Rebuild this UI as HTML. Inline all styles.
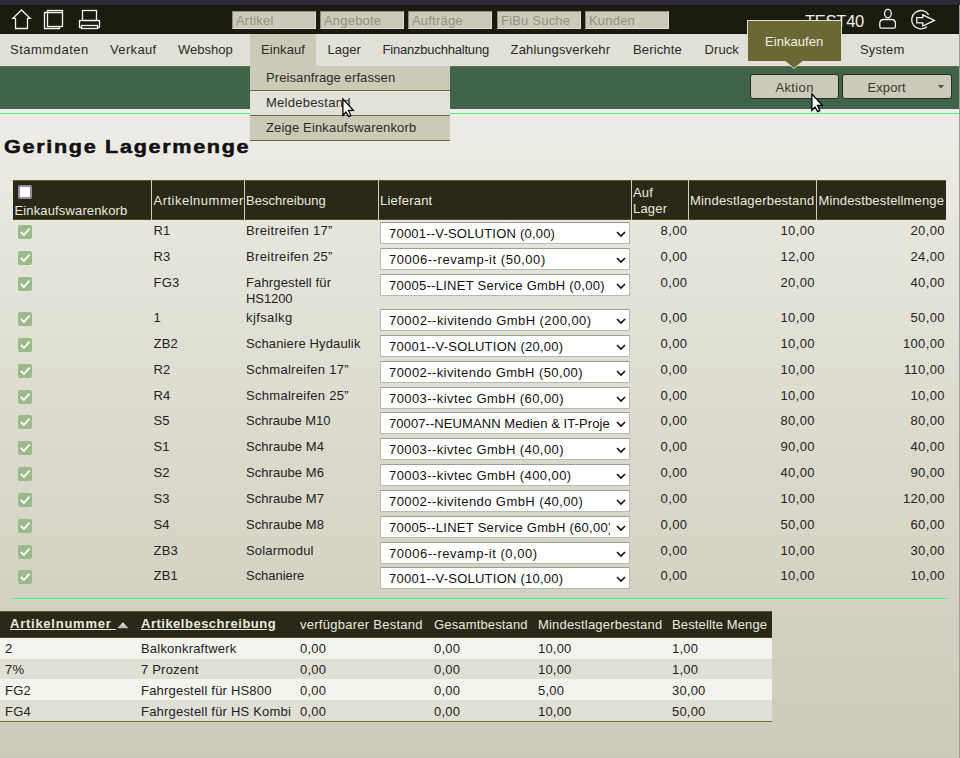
<!DOCTYPE html>
<html><head><meta charset="utf-8"><title>Geringe Lagermenge</title>
<style>
*{box-sizing:border-box}
html,body{margin:0;padding:0}
body{width:960px;height:758px;overflow:hidden;position:relative;font-family:"Liberation Sans",sans-serif;font-size:13px;color:#222;
background:linear-gradient(to bottom,#eeeee8 0px,#ecebe5 130px,#dad9cb 450px,#cccbb9 758px);}
.a{position:absolute}
.t{position:absolute;white-space:nowrap;line-height:15px;font-size:13px;letter-spacing:0.2px}
#strip{left:0;top:0;width:960px;height:5px;background:#2b2a39}
#top{left:0;top:5px;width:959px;height:29px;background:#1c1b10}
.srch{position:absolute;top:11px;width:84px;height:18px;background:#cbcab9;border-top:1px solid #8d8c80;border-left:1px solid #8d8c80;border-right:1px solid #e0dfd0;border-bottom:1px solid #e0dfd0}
.ph{color:#908f80}
#menu{left:0;top:34px;width:959px;height:32px;background:#e1e0d8}
.mi{color:#2a2a24}
#olive{left:0;top:66px;width:959px;height:1px;background:#6b6a38}
#green{left:0;top:67px;width:959px;height:42px;background:#3f6449}
#gap{left:0;top:109px;width:959px;height:4px;background:#efeee9}
#gline{left:0;top:113px;width:959px;height:1px;background:#3ff982}
#redge{left:959px;top:5px;width:1px;height:753px;background:#9e9e9a}
#redge2{display:none}
.btn{position:absolute;top:74px;height:25px;background:#cbcab8;border:1px solid #2b2a1c;border-radius:3px}
.bt{color:#3a3a2c}
.dd{position:absolute;left:250px;width:200px;height:25px;background:#cbcab8;border-bottom:1px solid #6b6a38}
#tip{left:747px;top:20px;width:95px;height:41px;background:#6a6936;border:1px solid #dedece;border-bottom:none}
.hdr{position:absolute;background:#2a2816;border-top:1px solid #57552a;border-bottom:1px solid #4b4922}
.sep{position:absolute;top:180px;width:1px;height:40px;background:#cfcfbf}
.ht{color:#ebebdf}
.sel{position:absolute;left:380px;width:250px;height:22px;background:#fff;border:1px solid #b9b9b4;border-top-color:#9c9c98;overflow:hidden}
.cb{position:absolute;left:18px;width:14px;height:14px;background:#9cb98b;border-radius:2px}
.r2{position:absolute;left:0;width:772px}
</style></head><body>

<div class="a" id="strip"></div><div class="a" id="top"></div><div class="a" style="left:0;top:5px;width:959px;height:1px;background:#121209"></div><div class="a" style="left:0;top:33px;width:959px;height:1px;background:#121209"></div>
<svg class="a" style="left:0;top:0" width="960" height="34" viewBox="0 0 960 34" fill="none" stroke="#f4f4ee" stroke-width="1.3">
<polygon points="21.5,10 12.9,18.4 15.5,18.4 15.5,28.5 27.5,28.5 27.5,18.4 30.1,18.4" stroke-linejoin="miter"/>
<rect x="47.5" y="10.5" width="15" height="16"/>
<polyline points="62.5,12.5 44.5,12.5 44.5,28.5 59.5,28.5 59.5,26.5"/>
<rect x="82.5" y="10.5" width="14" height="10"/>
<rect x="79.5" y="20.5" width="20" height="7"/>
<rect x="81.5" y="25.5" width="16" height="3" fill="#1c1b10"/>
<ellipse cx="887.9" cy="13.6" rx="3.4" ry="4.2"/>
<path d="M881.3,28.2 Q879.8,28.2 879.8,26.5 L879.8,23.3 Q879.8,19.5 884,19.5 L891.2,19.5 Q895.4,19.5 895.4,23.3 L895.4,26.5 Q895.4,28.2 893.9,28.2 Z"/>
<path d="M928.7,14.9 A9.2,9.2 0 1 0 926.9,26.7"/>
<polygon points="916.8,17.7 922.8,17.7 922.8,14.8 934.4,20.4 922.8,26 922.8,22.8 916.8,22.8" stroke-linejoin="miter"/>
</svg>
<div class="srch" style="left:232px"></div>
<div class="t ph" style="left:236px;top:13px;">Artikel</div>
<div class="srch" style="left:320px"></div>
<div class="t ph" style="left:324px;top:13px;">Angebote</div>
<div class="srch" style="left:408px"></div>
<div class="t ph" style="left:412px;top:13px;">Aufträge</div>
<div class="srch" style="left:497px"></div>
<div class="t ph" style="left:501px;top:13px;">FiBu Suche</div>
<div class="srch" style="left:585px"></div>
<div class="t ph" style="left:589px;top:13px;">Kunden</div>
<div class="t " style="left:805px;top:15px;font-size:16.5px;line-height:18px;color:#efefe8;letter-spacing:-0.25px;top:12px">TEST40</div>
<div class="a" id="menu"></div><div class="a" id="olive"></div>
<div class="a" style="left:250px;top:34px;width:66px;height:33px;background:#cbcab8"></div>
<div class="t mi" style="left:10px;top:42px;letter-spacing:0.5px">Stammdaten</div>
<div class="t mi" style="left:110px;top:42px;letter-spacing:0.35px">Verkauf</div>
<div class="t mi" style="left:178px;top:42px;letter-spacing:0px">Webshop</div>
<div class="t mi" style="left:261px;top:42px;letter-spacing:0.1px">Einkauf</div>
<div class="t mi" style="left:327.5px;top:42px;letter-spacing:0px">Lager</div>
<div class="t mi" style="left:382.5px;top:42px;letter-spacing:-0.2px">Finanzbuchhaltung</div>
<div class="t mi" style="left:510.5px;top:42px;letter-spacing:0.2px">Zahlungsverkehr</div>
<div class="t mi" style="left:633px;top:42px;letter-spacing:0.15px">Berichte</div>
<div class="t mi" style="left:704.5px;top:42px;letter-spacing:0.1px">Druck</div>
<div class="t mi" style="left:760px;top:42px;letter-spacing:0.2px">Programm</div>
<div class="t mi" style="left:860px;top:42px;letter-spacing:0.2px">System</div>
<div class="a" id="green"></div><div class="a" id="gap"></div><div class="a" id="gline"></div>
<div class="btn" style="left:750px;width:89px"></div>
<div class="t bt" style="left:775.5px;top:80px;letter-spacing:0.35px">Aktion</div>
<div class="btn" style="left:842px;width:110px"></div>
<div class="t bt" style="left:867.5px;top:80px;letter-spacing:0.1px">Export</div>
<svg class="a" style="left:936.5px;top:84px" width="8" height="6"><polygon points="1,1 7,1 4,4.5" fill="#4c4c54"/></svg>
<div class="dd" style="top:66px"></div>
<div class="dd" style="top:91px;background:#e3e2da"></div>
<div class="dd" style="top:116px"></div>
<div class="t mi" style="left:266px;top:70px;letter-spacing:0.1px">Preisanfrage erfassen</div>
<div class="t mi" style="left:266px;top:95px;letter-spacing:0.25px">Meldebestand</div>
<div class="t mi" style="left:266px;top:120px;letter-spacing:0.16px">Zeige Einkaufswarenkorb</div>
<div class="a" id="tip"></div>
<svg class="a" style="left:780px;top:60px" width="28" height="12"><polygon points="5,1 23,1 14,8.5" fill="#6a6936"/><polyline points="5,1 14,8.5 23,1" fill="none" stroke="#dedece" stroke-width="1"/><rect x="6" y="0" width="16" height="1.6" fill="#6a6936"/></svg>
<div class="t " style="left:765px;top:34px;color:#f0f0e2;letter-spacing:0.05px">Einkaufen</div>
<div class="a" id="redge"></div><div class="a" id="redge2"></div>
<div class="t" style="left:3.5px;top:137px;font-size:18px;line-height:20px;font-weight:bold;letter-spacing:1.4px;color:#111;-webkit-text-stroke:0.5px #111;transform:scaleX(1.2);transform-origin:0 0">Geringe Lagermenge</div>
<div class="hdr" style="left:13px;top:180px;width:933px;height:40px"></div>
<div class="sep" style="left:151px"></div>
<div class="sep" style="left:244px"></div>
<div class="sep" style="left:378px"></div>
<div class="sep" style="left:631px"></div>
<div class="sep" style="left:688px"></div>
<div class="sep" style="left:816px"></div>
<div class="a" style="left:18px;top:185px;width:14px;height:14px;background:#fff;border:2px solid #8f8fa0;border-radius:2px"></div>
<div class="t ht" style="left:14.5px;top:203px;letter-spacing:0.14px">Einkaufswarenkorb</div>
<div class="t ht" style="left:153.5px;top:193px;letter-spacing:0.5px">Artikelnummer</div>
<div class="t ht" style="left:246px;top:193px;letter-spacing:0.02px">Beschreibung</div>
<div class="t ht" style="left:380px;top:193px;">Lieferant</div>
<div class="t ht" style="left:633px;top:185px;">Auf</div>
<div class="t ht" style="left:633px;top:201px;">Lager</div>
<div class="t ht" style="left:690px;top:193px;letter-spacing:0.19px">Mindestlagerbestand</div>
<div class="t ht" style="left:818.5px;top:193px;letter-spacing:0.14px">Mindestbestellmenge</div>
<svg class="a" style="left:18px;top:225px" width="14" height="14"><rect width="14" height="14" rx="2" fill="#9cb98b"/><polyline points="2.8,6.8 5.9,10 11.5,3.6" fill="none" stroke="#fff" stroke-width="1.8"/></svg>
<div class="t " style="left:153.5px;top:223px;">R1</div>
<div class="t " style="left:246px;top:223px;letter-spacing:0.34px">Breitreifen 17”</div>
<div class="sel" style="top:222px"><div class="t" style="left:8px;top:2.5px;color:#111;letter-spacing:0.21px">70001--V-SOLUTION (0,00)</div><div style="position:absolute;right:0;top:0;width:19px;height:20px;background:#fff"></div><svg style="position:absolute;left:235px;top:7.5px" width="10" height="7"><polyline points="1,1 5,5 9,1" fill="none" stroke="#111" stroke-width="1.6"/></svg></div>
<div class="t " style="right:272.70000000000005px;top:223px;letter-spacing:0.35px">8,00</div>
<div class="t " style="right:145.20000000000005px;top:223px;letter-spacing:0.35px">10,00</div>
<div class="t " style="right:15.200000000000045px;top:223px;letter-spacing:0.35px">20,00</div>
<svg class="a" style="left:18px;top:251px" width="14" height="14"><rect width="14" height="14" rx="2" fill="#9cb98b"/><polyline points="2.8,6.8 5.9,10 11.5,3.6" fill="none" stroke="#fff" stroke-width="1.8"/></svg>
<div class="t " style="left:153.5px;top:249px;">R3</div>
<div class="t " style="left:246px;top:249px;letter-spacing:0.34px">Breitreifen 25”</div>
<div class="sel" style="top:248px"><div class="t" style="left:8px;top:2.5px;color:#111;letter-spacing:0.54px">70006--revamp-it (50,00)</div><div style="position:absolute;right:0;top:0;width:19px;height:20px;background:#fff"></div><svg style="position:absolute;left:235px;top:7.5px" width="10" height="7"><polyline points="1,1 5,5 9,1" fill="none" stroke="#111" stroke-width="1.6"/></svg></div>
<div class="t " style="right:272.70000000000005px;top:249px;letter-spacing:0.35px">0,00</div>
<div class="t " style="right:145.20000000000005px;top:249px;letter-spacing:0.35px">12,00</div>
<div class="t " style="right:15.200000000000045px;top:249px;letter-spacing:0.35px">24,00</div>
<svg class="a" style="left:18px;top:277px" width="14" height="14"><rect width="14" height="14" rx="2" fill="#9cb98b"/><polyline points="2.8,6.8 5.9,10 11.5,3.6" fill="none" stroke="#fff" stroke-width="1.8"/></svg>
<div class="t " style="left:153.5px;top:275px;">FG3</div>
<div class="t " style="left:246px;top:275px;letter-spacing:0.14px">Fahrgestell für</div>
<div class="t " style="left:246px;top:291px;letter-spacing:-0.08px">HS1200</div>
<div class="sel" style="top:274px"><div class="t" style="left:8px;top:2.5px;color:#111;letter-spacing:0.27px">70005--LINET Service GmbH (0,00)</div><div style="position:absolute;right:0;top:0;width:19px;height:20px;background:#fff"></div><svg style="position:absolute;left:235px;top:7.5px" width="10" height="7"><polyline points="1,1 5,5 9,1" fill="none" stroke="#111" stroke-width="1.6"/></svg></div>
<div class="t " style="right:272.70000000000005px;top:275px;letter-spacing:0.35px">0,00</div>
<div class="t " style="right:145.20000000000005px;top:275px;letter-spacing:0.35px">20,00</div>
<div class="t " style="right:15.200000000000045px;top:275px;letter-spacing:0.35px">40,00</div>
<svg class="a" style="left:18px;top:312px" width="14" height="14"><rect width="14" height="14" rx="2" fill="#9cb98b"/><polyline points="2.8,6.8 5.9,10 11.5,3.6" fill="none" stroke="#fff" stroke-width="1.8"/></svg>
<div class="t " style="left:153.5px;top:310px;">1</div>
<div class="t " style="left:246px;top:310px;letter-spacing:0.40px">kjfsalkg</div>
<div class="sel" style="top:309px"><div class="t" style="left:8px;top:2.5px;color:#111;letter-spacing:0.44px">70002--kivitendo GmbH (200,00)</div><div style="position:absolute;right:0;top:0;width:19px;height:20px;background:#fff"></div><svg style="position:absolute;left:235px;top:7.5px" width="10" height="7"><polyline points="1,1 5,5 9,1" fill="none" stroke="#111" stroke-width="1.6"/></svg></div>
<div class="t " style="right:272.70000000000005px;top:310px;letter-spacing:0.35px">0,00</div>
<div class="t " style="right:145.20000000000005px;top:310px;letter-spacing:0.35px">10,00</div>
<div class="t " style="right:15.200000000000045px;top:310px;letter-spacing:0.35px">50,00</div>
<svg class="a" style="left:18px;top:338px" width="14" height="14"><rect width="14" height="14" rx="2" fill="#9cb98b"/><polyline points="2.8,6.8 5.9,10 11.5,3.6" fill="none" stroke="#fff" stroke-width="1.8"/></svg>
<div class="t " style="left:153.5px;top:336px;">ZB2</div>
<div class="t " style="left:246px;top:336px;letter-spacing:0.14px">Schaniere Hydaulik</div>
<div class="sel" style="top:335px"><div class="t" style="left:8px;top:2.5px;color:#111;letter-spacing:0.24px">70001--V-SOLUTION (20,00)</div><div style="position:absolute;right:0;top:0;width:19px;height:20px;background:#fff"></div><svg style="position:absolute;left:235px;top:7.5px" width="10" height="7"><polyline points="1,1 5,5 9,1" fill="none" stroke="#111" stroke-width="1.6"/></svg></div>
<div class="t " style="right:272.70000000000005px;top:336px;letter-spacing:0.35px">0,00</div>
<div class="t " style="right:145.20000000000005px;top:336px;letter-spacing:0.35px">10,00</div>
<div class="t " style="right:15.200000000000045px;top:336px;letter-spacing:0.35px">100,00</div>
<svg class="a" style="left:18px;top:364px" width="14" height="14"><rect width="14" height="14" rx="2" fill="#9cb98b"/><polyline points="2.8,6.8 5.9,10 11.5,3.6" fill="none" stroke="#fff" stroke-width="1.8"/></svg>
<div class="t " style="left:153.5px;top:362px;">R2</div>
<div class="t " style="left:246px;top:362px;letter-spacing:0.29px">Schmalreifen 17”</div>
<div class="sel" style="top:361px"><div class="t" style="left:8px;top:2.5px;color:#111;letter-spacing:0.41px">70002--kivitendo GmbH (50,00)</div><div style="position:absolute;right:0;top:0;width:19px;height:20px;background:#fff"></div><svg style="position:absolute;left:235px;top:7.5px" width="10" height="7"><polyline points="1,1 5,5 9,1" fill="none" stroke="#111" stroke-width="1.6"/></svg></div>
<div class="t " style="right:272.70000000000005px;top:362px;letter-spacing:0.35px">0,00</div>
<div class="t " style="right:145.20000000000005px;top:362px;letter-spacing:0.35px">10,00</div>
<div class="t " style="right:15.200000000000045px;top:362px;letter-spacing:0.35px">110,00</div>
<svg class="a" style="left:18px;top:390px" width="14" height="14"><rect width="14" height="14" rx="2" fill="#9cb98b"/><polyline points="2.8,6.8 5.9,10 11.5,3.6" fill="none" stroke="#fff" stroke-width="1.8"/></svg>
<div class="t " style="left:153.5px;top:388px;">R4</div>
<div class="t " style="left:246px;top:388px;letter-spacing:0.29px">Schmalreifen 25”</div>
<div class="sel" style="top:387px"><div class="t" style="left:8px;top:2.5px;color:#111;letter-spacing:0.42px">70003--kivtec GmbH (60,00)</div><div style="position:absolute;right:0;top:0;width:19px;height:20px;background:#fff"></div><svg style="position:absolute;left:235px;top:7.5px" width="10" height="7"><polyline points="1,1 5,5 9,1" fill="none" stroke="#111" stroke-width="1.6"/></svg></div>
<div class="t " style="right:272.70000000000005px;top:388px;letter-spacing:0.35px">0,00</div>
<div class="t " style="right:145.20000000000005px;top:388px;letter-spacing:0.35px">10,00</div>
<div class="t " style="right:15.200000000000045px;top:388px;letter-spacing:0.35px">10,00</div>
<svg class="a" style="left:18px;top:415px" width="14" height="14"><rect width="14" height="14" rx="2" fill="#9cb98b"/><polyline points="2.8,6.8 5.9,10 11.5,3.6" fill="none" stroke="#fff" stroke-width="1.8"/></svg>
<div class="t " style="left:153.5px;top:413px;">S5</div>
<div class="t " style="left:246px;top:413px;letter-spacing:0.00px">Schraube M10</div>
<div class="sel" style="top:412px"><div class="t" style="left:8px;top:2.5px;color:#111;letter-spacing:0.08px">70007--NEUMANN Medien &amp; IT-Projekte</div><div style="position:absolute;right:0;top:0;width:19px;height:20px;background:#fff"></div><svg style="position:absolute;left:235px;top:7.5px" width="10" height="7"><polyline points="1,1 5,5 9,1" fill="none" stroke="#111" stroke-width="1.6"/></svg></div>
<div class="t " style="right:272.70000000000005px;top:413px;letter-spacing:0.35px">0,00</div>
<div class="t " style="right:145.20000000000005px;top:413px;letter-spacing:0.35px">80,00</div>
<div class="t " style="right:15.200000000000045px;top:413px;letter-spacing:0.35px">80,00</div>
<svg class="a" style="left:18px;top:441px" width="14" height="14"><rect width="14" height="14" rx="2" fill="#9cb98b"/><polyline points="2.8,6.8 5.9,10 11.5,3.6" fill="none" stroke="#fff" stroke-width="1.8"/></svg>
<div class="t " style="left:153.5px;top:439px;">S1</div>
<div class="t " style="left:246px;top:439px;letter-spacing:0.06px">Schraube M4</div>
<div class="sel" style="top:438px"><div class="t" style="left:8px;top:2.5px;color:#111;letter-spacing:0.42px">70003--kivtec GmbH (40,00)</div><div style="position:absolute;right:0;top:0;width:19px;height:20px;background:#fff"></div><svg style="position:absolute;left:235px;top:7.5px" width="10" height="7"><polyline points="1,1 5,5 9,1" fill="none" stroke="#111" stroke-width="1.6"/></svg></div>
<div class="t " style="right:272.70000000000005px;top:439px;letter-spacing:0.35px">0,00</div>
<div class="t " style="right:145.20000000000005px;top:439px;letter-spacing:0.35px">90,00</div>
<div class="t " style="right:15.200000000000045px;top:439px;letter-spacing:0.35px">40,00</div>
<svg class="a" style="left:18px;top:467px" width="14" height="14"><rect width="14" height="14" rx="2" fill="#9cb98b"/><polyline points="2.8,6.8 5.9,10 11.5,3.6" fill="none" stroke="#fff" stroke-width="1.8"/></svg>
<div class="t " style="left:153.5px;top:465px;">S2</div>
<div class="t " style="left:246px;top:465px;letter-spacing:0.06px">Schraube M6</div>
<div class="sel" style="top:464px"><div class="t" style="left:8px;top:2.5px;color:#111;letter-spacing:0.42px">70003--kivtec GmbH (400,00)</div><div style="position:absolute;right:0;top:0;width:19px;height:20px;background:#fff"></div><svg style="position:absolute;left:235px;top:7.5px" width="10" height="7"><polyline points="1,1 5,5 9,1" fill="none" stroke="#111" stroke-width="1.6"/></svg></div>
<div class="t " style="right:272.70000000000005px;top:465px;letter-spacing:0.35px">0,00</div>
<div class="t " style="right:145.20000000000005px;top:465px;letter-spacing:0.35px">40,00</div>
<div class="t " style="right:15.200000000000045px;top:465px;letter-spacing:0.35px">90,00</div>
<svg class="a" style="left:18px;top:493px" width="14" height="14"><rect width="14" height="14" rx="2" fill="#9cb98b"/><polyline points="2.8,6.8 5.9,10 11.5,3.6" fill="none" stroke="#fff" stroke-width="1.8"/></svg>
<div class="t " style="left:153.5px;top:491px;">S3</div>
<div class="t " style="left:246px;top:491px;letter-spacing:0.06px">Schraube M7</div>
<div class="sel" style="top:490px"><div class="t" style="left:8px;top:2.5px;color:#111;letter-spacing:0.42px">70002--kivitendo GmbH (40,00)</div><div style="position:absolute;right:0;top:0;width:19px;height:20px;background:#fff"></div><svg style="position:absolute;left:235px;top:7.5px" width="10" height="7"><polyline points="1,1 5,5 9,1" fill="none" stroke="#111" stroke-width="1.6"/></svg></div>
<div class="t " style="right:272.70000000000005px;top:491px;letter-spacing:0.35px">0,00</div>
<div class="t " style="right:145.20000000000005px;top:491px;letter-spacing:0.35px">10,00</div>
<div class="t " style="right:15.200000000000045px;top:491px;letter-spacing:0.35px">120,00</div>
<svg class="a" style="left:18px;top:519px" width="14" height="14"><rect width="14" height="14" rx="2" fill="#9cb98b"/><polyline points="2.8,6.8 5.9,10 11.5,3.6" fill="none" stroke="#fff" stroke-width="1.8"/></svg>
<div class="t " style="left:153.5px;top:517px;">S4</div>
<div class="t " style="left:246px;top:517px;letter-spacing:0.06px">Schraube M8</div>
<div class="sel" style="top:516px"><div class="t" style="left:8px;top:2.5px;color:#111;letter-spacing:0.28px">70005--LINET Service GmbH (60,00)</div><div style="position:absolute;right:0;top:0;width:19px;height:20px;background:#fff"></div><svg style="position:absolute;left:235px;top:7.5px" width="10" height="7"><polyline points="1,1 5,5 9,1" fill="none" stroke="#111" stroke-width="1.6"/></svg></div>
<div class="t " style="right:272.70000000000005px;top:517px;letter-spacing:0.35px">0,00</div>
<div class="t " style="right:145.20000000000005px;top:517px;letter-spacing:0.35px">50,00</div>
<div class="t " style="right:15.200000000000045px;top:517px;letter-spacing:0.35px">60,00</div>
<svg class="a" style="left:18px;top:545px" width="14" height="14"><rect width="14" height="14" rx="2" fill="#9cb98b"/><polyline points="2.8,6.8 5.9,10 11.5,3.6" fill="none" stroke="#fff" stroke-width="1.8"/></svg>
<div class="t " style="left:153.5px;top:543px;">ZB3</div>
<div class="t " style="left:246px;top:543px;letter-spacing:0.19px">Solarmodul</div>
<div class="sel" style="top:542px"><div class="t" style="left:8px;top:2.5px;color:#111;letter-spacing:0.52px">70006--revamp-it (0,00)</div><div style="position:absolute;right:0;top:0;width:19px;height:20px;background:#fff"></div><svg style="position:absolute;left:235px;top:7.5px" width="10" height="7"><polyline points="1,1 5,5 9,1" fill="none" stroke="#111" stroke-width="1.6"/></svg></div>
<div class="t " style="right:272.70000000000005px;top:543px;letter-spacing:0.35px">0,00</div>
<div class="t " style="right:145.20000000000005px;top:543px;letter-spacing:0.35px">10,00</div>
<div class="t " style="right:15.200000000000045px;top:543px;letter-spacing:0.35px">30,00</div>
<svg class="a" style="left:18px;top:570px" width="14" height="14"><rect width="14" height="14" rx="2" fill="#9cb98b"/><polyline points="2.8,6.8 5.9,10 11.5,3.6" fill="none" stroke="#fff" stroke-width="1.8"/></svg>
<div class="t " style="left:153.5px;top:568px;">ZB1</div>
<div class="t " style="left:246px;top:568px;letter-spacing:-0.04px">Schaniere</div>
<div class="sel" style="top:567px"><div class="t" style="left:8px;top:2.5px;color:#111;letter-spacing:0.24px">70001--V-SOLUTION (10,00)</div><div style="position:absolute;right:0;top:0;width:19px;height:20px;background:#fff"></div><svg style="position:absolute;left:235px;top:7.5px" width="10" height="7"><polyline points="1,1 5,5 9,1" fill="none" stroke="#111" stroke-width="1.6"/></svg></div>
<div class="t " style="right:272.70000000000005px;top:568px;letter-spacing:0.35px">0,00</div>
<div class="t " style="right:145.20000000000005px;top:568px;letter-spacing:0.35px">10,00</div>
<div class="t " style="right:15.200000000000045px;top:568px;letter-spacing:0.35px">10,00</div>
<div class="a" style="left:12px;top:598px;width:935px;height:1px;background:#3ff982"></div>
<div class="hdr" style="left:0;top:611px;width:772px;height:27px"></div>
<div class="t ht" style="left:10px;top:616px;font-weight:bold;text-decoration:underline;letter-spacing:0.75px">Artikelnummer&nbsp;</div>
<svg class="a" style="left:116px;top:620px" width="14" height="10"><defs><linearGradient id="sg" x1="0" y1="0" x2="0" y2="1"><stop offset="0" stop-color="#e8e8e8"/><stop offset="1" stop-color="#b0b0b0"/></linearGradient></defs><polygon points="1.2,8.2 12.6,8.2 6.9,2.2" fill="url(#sg)"/></svg>
<div class="t ht" style="left:141px;top:616px;font-weight:bold;text-decoration:underline;letter-spacing:0.5px">Artikelbeschreibung</div>
<div class="t ht" style="left:300px;top:617px;letter-spacing:0.26px">verfügbarer Bestand</div>
<div class="t ht" style="left:434px;top:617px;letter-spacing:0.15px">Gesamtbestand</div>
<div class="t ht" style="left:538px;top:617px;letter-spacing:0.19px">Mindestlagerbestand</div>
<div class="t ht" style="left:672px;top:617px;letter-spacing:0.13px">Bestellte Menge</div>
<div class="r2" style="top:638px;height:20.7px;background:#f3f3ee"></div>
<div class="t " style="left:5px;top:641px;">2</div>
<div class="t " style="left:141px;top:641px;">Balkonkraftwerk</div>
<div class="t " style="left:300px;top:641px;">0,00</div>
<div class="t " style="left:434px;top:641px;">0,00</div>
<div class="t " style="left:538px;top:641px;">10,00</div>
<div class="t " style="left:672px;top:641px;">1,00</div>
<div class="r2" style="top:658.7px;height:20.7px;background:#e0dfd6"></div>
<div class="t " style="left:5px;top:662px;">7%</div>
<div class="t " style="left:141px;top:662px;">7 Prozent</div>
<div class="t " style="left:300px;top:662px;">0,00</div>
<div class="t " style="left:434px;top:662px;">0,00</div>
<div class="t " style="left:538px;top:662px;">10,00</div>
<div class="t " style="left:672px;top:662px;">1,00</div>
<div class="r2" style="top:679.4px;height:20.7px;background:#f3f3ee"></div>
<div class="t " style="left:5px;top:683px;">FG2</div>
<div class="t " style="left:141px;top:683px;">Fahrgestell für HS800</div>
<div class="t " style="left:300px;top:683px;">0,00</div>
<div class="t " style="left:434px;top:683px;">0,00</div>
<div class="t " style="left:538px;top:683px;">5,00</div>
<div class="t " style="left:672px;top:683px;">30,00</div>
<div class="r2" style="top:700.1px;height:20.7px;background:#e0dfd6"></div>
<div class="t " style="left:5px;top:704px;">FG4</div>
<div class="t " style="left:141px;top:704px;">Fahrgestell für HS Kombi</div>
<div class="t " style="left:300px;top:704px;">0,00</div>
<div class="t " style="left:434px;top:704px;">0,00</div>
<div class="t " style="left:538px;top:704px;">10,00</div>
<div class="t " style="left:672px;top:704px;">50,00</div>
<div class="a" style="left:0;top:721px;width:772px;height:1px;background:#6b6a38"></div>
<svg class="a" style="left:341px;top:97px" width="16" height="22" viewBox="0 0 16 22"><path d="M1.9,1.9 L1.9,18.3 L5,15 L7.6,19.6 L9.8,18.6 L7.5,13.5 L12.3,13.4 Z" fill="#fff" stroke="#000" stroke-width="1.3" stroke-linejoin="miter"/></svg>
<svg class="a" style="left:810px;top:92px" width="16" height="22" viewBox="0 0 16 22"><path d="M1.9,1.9 L1.9,18.3 L5,15 L7.6,19.6 L9.8,18.6 L7.5,13.5 L12.3,13.4 Z" fill="#fff" stroke="#000" stroke-width="1.3" stroke-linejoin="miter"/></svg>
</body></html>
